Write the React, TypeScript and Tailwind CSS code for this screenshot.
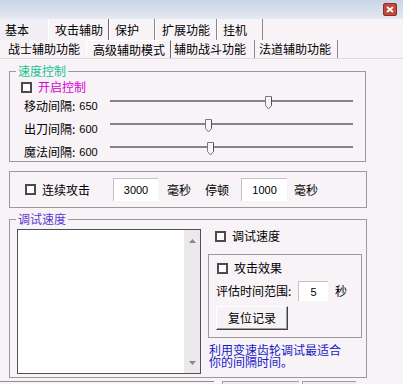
import React from 'react';

type SliderProps = { thumb: number };

function CheckBox() {
  return <div className="w-[11px] h-[11px] border-2 border-[#4c4a4c] bg-white shrink-0" />;
}

function Slider({ thumb }: SliderProps) {
  return (
    <div className="relative w-[243px] h-full">
      <div className="mt-[6px] h-[2px] bg-[#858385]" />
      <svg
        className="absolute top-[2px]"
        style={{ left: thumb }}
        width="8"
        height="14"
        viewBox="0 0 8 14"
      >
        <polygon points="0.5,0.5 6.5,0.5 6.5,9.5 3.5,13 0.5,9.5" fill="#f7f5f7" stroke="#7b797b" />
        <line x1="6.5" y1="1" x2="6.5" y2="9.5" stroke="#505050" />
      </svg>
    </div>
  );
}

function SliderRow({ label, value, thumb }: { label: string; value: string; thumb: number }) {
  return (
    <div className="flex h-[23px]">
      <div className="w-[86px] flex items-center">
        <span>{label}:</span>
        <span className="ml-[4px] text-[11px] font-['Liberation_Sans',sans-serif]">{value}</span>
      </div>
      <Slider thumb={thumb} />
    </div>
  );
}

function Field({ value, w, h }: { value: string; w: string; h: string }) {
  return (
    <div
      className={`${w} ${h} bg-white border-t border-l border-[#c4c0c4] flex items-center justify-center text-[11px] font-['Liberation_Sans',sans-serif]`}
    >
      {value}
    </div>
  );
}

export default function App() {
  return (
    <div className="w-[403px] h-[384px] overflow-hidden bg-[#f7f3f7] text-[12px] leading-[14px] text-black font-['Noto_Sans_CJK_SC','Noto_Sans',sans-serif]">
      {/* title bar */}
      <div className="h-[19px] bg-linear-to-b from-[#cad5e5] to-[#e4e9f2] flex justify-end pt-[3px] pr-[6px]">
        <div className="w-[14px] h-[13px] rounded-[2px] bg-[#c4473d] border border-[#8c2f28] flex items-center justify-center">
          <svg width="8" height="7" viewBox="0 0 8 7">
            <path d="M1 1 L7 6 M7 1 L1 6" stroke="#ffffff" strokeWidth="1.8" />
          </svg>
        </div>
      </div>

      {/* tab row 1 */}
      <div className="h-[21px] flex">
        <div className="w-[48px] flex items-center pl-[5px] bg-[#f1eff4]">基本</div>
        <div className="w-[61px] flex items-center pl-[6px] border-l border-white border-r border-r-[#6a686a]">攻击辅助</div>
        <div className="w-[46px] flex items-center pl-[5px] border-l border-white border-r border-r-[#8a888a]">保护</div>
        <div className="w-[62px] flex items-center pl-[6px] border-l border-white border-r border-r-[#8a888a]">扩展功能</div>
        <div className="w-[46px] flex items-center pl-[5px] border-l border-white border-r border-r-[#8a888a]">挂机</div>
      </div>

      {/* tab row 2 */}
      <div className="h-[19px] flex border-b border-[#dedade]">
        <div className="w-[86px] flex items-center pl-[8px]">战士辅助功能</div>
        <div className="w-[85px] flex items-center pl-[6px] border-l border-white border-t border-t-white border-r border-r-[#6a686a]">高级辅助模式</div>
        <div className="w-[84px] flex items-center pl-[3px] border-r border-[#8a888a]">辅助战斗功能</div>
        <div className="w-[83px] flex items-center pl-[4px] border-r border-[#8a888a]">法道辅助功能</div>
      </div>

      <div className="pl-[9px]">
        {/* 速度控制 */}
        <fieldset className="mt-[5px] w-[357px] h-[98px] border border-[#9c999c]">
          <legend className="ml-[6px] px-[2px] leading-[14px] text-[#19c28f]">速度控制</legend>
          <div className="mt-[2px] h-[14px] flex items-center pl-[11px]">
            <CheckBox />
            <span className="ml-[6px] text-[#d400d4]">开启控制</span>
          </div>
          <div className="pl-[14px]">
            <SliderRow label="移动间隔" value="650" thumb={155} />
            <SliderRow label="出刀间隔" value="600" thumb={95} />
            <SliderRow label="魔法间隔" value="600" thumb={97} />
          </div>
        </fieldset>

        {/* 连续攻击 */}
        <div className="mt-[9px] w-[358px] h-[37px] border border-[#9c999c] flex items-center pl-[15px]">
          <CheckBox />
          <span className="ml-[6px]">连续攻击</span>
          <div className="ml-[23px]">
            <Field value="3000" w="w-[45px]" h="h-[23px]" />
          </div>
          <span className="ml-[9px]">毫秒</span>
          <span className="ml-[14px]">停顿</span>
          <div className="ml-[12px]">
            <Field value="1000" w="w-[46px]" h="h-[23px]" />
          </div>
          <span className="ml-[7px]">毫秒</span>
        </div>

        {/* 调试速度 */}
        <fieldset className="mt-[4px] w-[358px] h-[166px] border border-[#9c999c]">
          <legend className="ml-[6px] px-[2px] leading-[14px] text-[#5a38d0]">调试速度</legend>
          <div className="flex items-start pl-[7px]">
            <div className="mt-[3px] w-[184px] h-[145px] border border-[#505050] flex">
              <div className="flex-1 bg-white" />
              <div className="w-[16px] bg-[#ebe9ec] flex flex-col items-center justify-between pt-[9px] pb-[8px]">
                <svg width="7" height="4" viewBox="0 0 7 4">
                  <polygon points="0,4 7,4 3.5,0" fill="#8a888a" />
                </svg>
                <svg width="7" height="4" viewBox="0 0 7 4">
                  <polygon points="0,0 7,0 3.5,4" fill="#8a888a" />
                </svg>
              </div>
            </div>

            <div className="ml-[7px] w-[154px]">
              <div className="mt-[3px] h-[14px] flex items-center pl-[7px]">
                <CheckBox />
                <span className="ml-[6px]">调试速度</span>
              </div>

              <div className="mt-[11px] h-[84px] border border-[#9c999c]">
                <div className="mt-[6px] h-[14px] flex items-center pl-[8px]">
                  <CheckBox />
                  <span className="ml-[6px]">攻击效果</span>
                </div>
                <div className="mt-[6px] h-[20px] flex items-center pl-[7px]">
                  <span className="w-[82px]">评估时间范围:</span>
                  <Field value="5" w="w-[30px]" h="h-[20px]" />
                  <span className="ml-[7px]">秒</span>
                </div>
                <div className="mt-[5px] ml-[7px] w-[72px] h-[24px] bg-[#f5f3f6] border border-t-white border-l-white border-r-[#404040] border-b-[#404040] shadow-[inset_-1px_-1px_0_#a09ea0] flex items-center justify-center">
                  复位记录
                </div>
              </div>

              <p className="mt-[6px] ml-[1px] w-[140px] leading-[12px] text-[#1818c6]">
                利用变速齿轮调试最适合你的间隔时间。
              </p>
            </div>
          </div>
        </fieldset>
      </div>

      {/* edge of the controls below */}
      <div className="mt-[3px] flex h-[3px]">
        <div className="w-[214px] border-t border-[#8e8c8e]" />
        <div className="ml-[8px] w-[77px] border-t border-l border-[#a09ea0] bg-[#eeecef]" />
        <div className="ml-[3px] w-[54px] border-t border-l border-[#a09ea0] bg-[#eeecef]" />
      </div>
    </div>
  );
}
